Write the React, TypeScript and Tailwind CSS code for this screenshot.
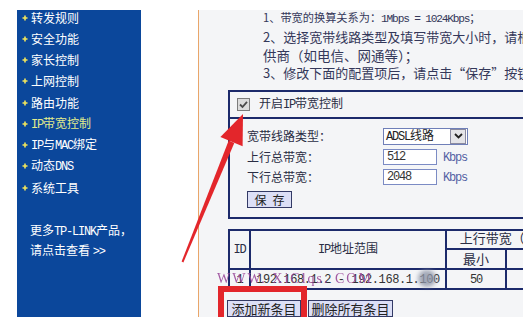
import type { ReactNode } from "react";

const M = ({ children }: { children: ReactNode }) => (
    <span className="font-['Liberation_Mono',monospace] tracking-[-1.2px]">{children}</span>
);

const Plus = () => (
    <svg width="6" height="6" viewBox="0 0 6 6" className="shrink-0">
        <path d="M3 0.5V5.5M0.5 3H5.5" stroke="#f3e65c" strokeWidth="1.6" />
    </svg>
);

const menu: { label: ReactNode; active?: boolean }[] = [
    { label: "转发规则" },
    { label: "安全功能" },
    { label: "家长控制" },
    { label: "上网控制" },
    { label: "路由功能" },
    { label: <><M>IP</M>带宽控制</>, active: true },
    { label: <><M>IP</M>与<M>MAC</M>绑定</> },
    { label: <>动态<M>DNS</M></> },
    { label: "系统工具" },
];

const cell = "p-0 border-2 border-[#1c2a6b] text-center";

export default function App() {
    return (
        <div className="relative w-[523px] h-[317px] overflow-hidden bg-white font-['Noto_Sans_CJK_SC',sans-serif]">
            <div className="flex h-full pt-[10px] pl-[17px] gap-[57px]">
                {/* left menu */}
                <aside className="w-[124px] shrink-0 bg-[#0b479b] overflow-hidden text-white text-[12px]">
                    <ul className="mt-[-3px]">
                        {menu.map((m, i) => (
                            <li
                                key={i}
                                className={`h-[21.25px] flex items-center gap-[2px] pl-[5px] whitespace-nowrap ${m.active ? "text-[#e2ec8c]" : ""}`}
                            >
                                <Plus />
                                <span className="ml-[1px]">{m.label}</span>
                            </li>
                        ))}
                    </ul>
                    <div className="mt-[23px] pl-[13px] leading-[18px] whitespace-nowrap">
                        <div>更多<M>TP-LINK</M>产品，</div>
                        <div>请点击查看 <M>&gt;&gt;</M></div>
                    </div>
                </aside>

                {/* content */}
                <main className="flex-1 min-w-0 border-l border-[#e9a66a] bg-[#f4f5f7] overflow-hidden pl-[29px] text-[12px] text-[#2a2d44]">
                    <div className="mt-[-2.4px] pl-[35px] leading-[18.2px] whitespace-nowrap text-[#34385a] text-[13px]">
                        <div className="text-[11.2px]">1、带宽的换算关系为：<M>1Mbps = 1024Kbps</M>；</div>
                        <div>2、选择宽带线路类型及填写带宽大小时，请根据您申请的宽带线路类型和带宽大小填写</div>
                        <div className="text-[13.5px]">供商（如电信、网通等）；</div>
                        <div>3、修改下面的配置项后，请点击“保存”按钮，使配置项生效。</div>
                    </div>

                    {/* bandwidth panel */}
                    <div className="mt-[7.5px] w-[400px] border-2 border-[#1c2a6b]">
                        <div className="h-[27px] flex items-center pl-[7px] gap-[9px] border-b-2 border-[#1c2a6b]">
                            <svg width="13" height="13" viewBox="0 0 13 13">
                                <rect x="0.5" y="0.5" width="12" height="12" fill="#dcdcdc" stroke="#7c7c7c" />
                                <path d="M3 6.5L5.5 9L10 3.8" fill="none" stroke="#4a4a4a" strokeWidth="1.8" />
                            </svg>
                            <span className="whitespace-nowrap">开启<M>IP</M>带宽控制</span>
                        </div>
                        <div className="pt-[7px] pl-[17px] pb-[8.5px]">
                            <div className="h-[20.5px] flex items-center">
                                <span className="w-[136px]">宽带线路类型：</span>
                                <div className="w-[85px] h-[17px] border border-[#6f7fb8] bg-white flex items-center">
                                    <span className="flex-1 pl-[2px] whitespace-nowrap text-[#222]"><M>ADSL</M>线路</span>
                                    <span className="w-[16px] h-[15px] mr-[1px] bg-[#e4e4e8] border border-[#8a8aa0] flex items-center justify-center">
                                        <svg width="9" height="6" viewBox="0 0 9 6">
                                            <path d="M1 1L4.5 4.5L8 1" fill="none" stroke="#222" strokeWidth="1.8" />
                                        </svg>
                                    </span>
                                </div>
                            </div>
                            {[
                                ["上行总带宽：", "512"],
                                ["下行总带宽：", "2048"],
                            ].map(([label, val]) => (
                                <div key={label} className="h-[20.5px] flex items-center">
                                    <span className="w-[136px]">{label}</span>
                                    <div className="w-[54px] h-[16px] border border-[#7b8bc4] bg-white flex items-center pl-[3px] text-[#333]">
                                        <M>{val}</M>
                                    </div>
                                    <span className="ml-[6px] text-[#5562a4]"><M>Kbps</M></span>
                                </div>
                            ))}
                            <button className="mt-[4px] w-[45px] h-[17px] border border-[#333a66] bg-[#dcdff6] flex items-center justify-center gap-[6px] text-[#222] leading-[14px]">
                                <span>保</span>
                                <span>存</span>
                            </button>
                        </div>
                    </div>

                    {/* rules table */}
                    <table className="mt-[10px] w-[349px] table-fixed border-collapse border-2 border-[#1c2a6b] text-[#2a2d44] leading-[14px]">
                        <colgroup>
                            <col className="w-[21px]" />
                            <col className="w-[196px]" />
                            <col className="w-[60px]" />
                            <col className="w-[72px]" />
                        </colgroup>
                        <tbody>
                            <tr className="h-[19px]">
                                <td rowSpan={2} className={cell}><M>ID</M></td>
                                <td rowSpan={2} className={cell}><M>IP</M>地址范围</td>
                                <td colSpan={2} className={`${cell} whitespace-nowrap text-[13px]`}>上行带宽（<M>Kbps</M>）</td>
                            </tr>
                            <tr className="h-[20px]">
                                <td className={`${cell} text-[13px]`}>最小</td>
                                <td className={`${cell} text-[13px]`}>最大</td>
                            </tr>
                            <tr className="h-[20px] text-[#333]">
                                <td className={cell}><M>1</M></td>
                                <td className={`${cell} whitespace-nowrap`}>
                                    <span className="font-['Liberation_Mono',monospace] tracking-[-0.4px]">192.168.1.2 - 192.168.1.100</span>
                                </td>
                                <td className={cell}><M>50</M></td>
                                <td className={cell}><M>100</M></td>
                            </tr>
                        </tbody>
                    </table>

                    <div className="mt-[10px] flex gap-[7px] ml-[-1px] text-[13px]">
                        <button className="w-[74px] h-[17px] border border-[#333a66] bg-[#dcdff6] text-[#222] whitespace-nowrap leading-[15px]">添加新条目</button>
                        <button className="w-[85px] h-[17px] border border-[#333a66] bg-[#dcdff6] text-[#222] whitespace-nowrap leading-[15px]">删除所有条目</button>
                    </div>
                </main>
            </div>

            {/* watermark and smudge */}
            <div className="absolute left-[217px] top-[268px] text-[14px] font-['Liberation_Serif',serif] text-[#9a4a9a] tracking-[2px] whitespace-nowrap opacity-90">
                WWW. XiClqs. COM
            </div>
            <div className="absolute left-[418px] top-[270px] w-[18px] h-[17px] rounded-full bg-[#8f96a8] blur-[2px] opacity-80" />

            {/* red annotation */}
            <div className="absolute left-[218px] top-[286px] w-[89px] h-[40px] border-[6px] border-[#e3262b]" />
            <svg className="absolute left-0 top-0 pointer-events-none" width="523" height="317" viewBox="0 0 523 317">
                <polygon points="181.6,261.6 183.4,262.4 234.3,142.9 228.7,140.5" fill="#e3262b" />
                <polygon points="243,114 220.4,137.1 242.6,146.3" fill="#e3262b" />
            </svg>
        </div>
    );
}
